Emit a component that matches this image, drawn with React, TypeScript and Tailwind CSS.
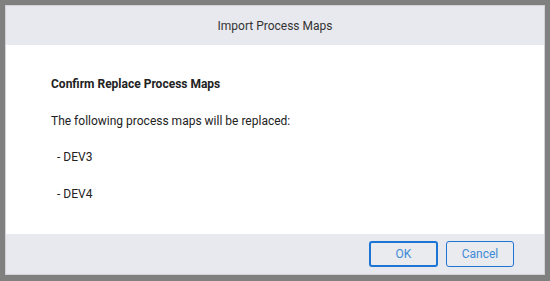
import React from "react";

export default function App() {
  return (
    <div className="w-[550px] h-[281px] bg-[#808080] pt-[5px] pl-[5px] pr-[5px] pb-[6px]" style={{ fontFamily: "Roboto, 'Noto Sans', sans-serif" }}>
      <div className="h-full border border-[#d2d2d6] flex flex-col bg-white">
        <div className="h-[39px] shrink-0 bg-[#e8e9ee] flex items-center justify-center text-[12px] text-[#333]">
          Import Process Maps
        </div>
        <div className="flex-1 bg-white pl-[45px] pt-[21px] text-[12px] text-[#222]">
          <div className="h-[36.5px] flex items-center font-bold">Confirm Replace Process Maps</div>
          <div className="h-[36.5px] flex items-center">The following process maps will be replaced:</div>
          <div className="h-[36.5px] flex items-center pl-[6px]">- DEV3</div>
          <div className="h-[36.5px] flex items-center pl-[6px]">- DEV4</div>
        </div>
        <div className="h-[40px] shrink-0 bg-[#e8e9ee] flex items-center justify-end gap-[8px] pr-[30px]">
          <button className="w-[69px] h-[26px] border-2 border-[#1c74d4] rounded-[3px] text-[12px] text-[#3d8ad8] bg-[#eaebef]">OK</button>
          <button className="w-[68px] h-[26px] border border-[#1c74d4] rounded-[3px] text-[12px] text-[#3d8ad8] bg-[#eaebef]">Cancel</button>
        </div>
      </div>
    </div>
  );
}
